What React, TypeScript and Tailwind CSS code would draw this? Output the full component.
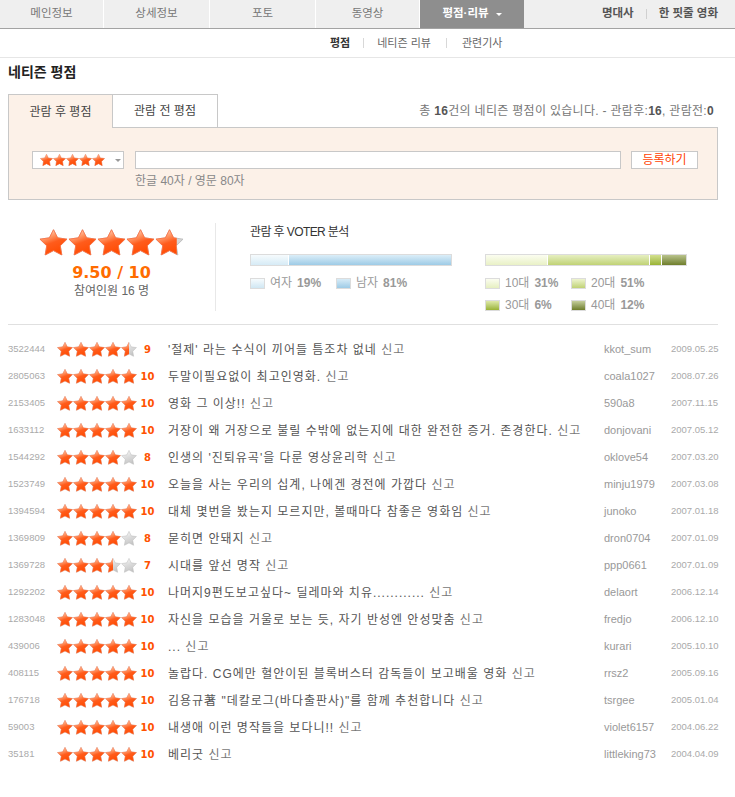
import React, { useId } from "react";

const STAR =
  "M12 0.6 L15.4 7.3 L23.2 8.4 L17.6 13.9 L18.9 21.5 L12 17.9 L5.1 21.5 L6.4 13.9 L0.8 8.4 L8.6 7.3 Z";

function Star({ w, fill }: { w: number; fill: number }) {
  const raw = useId().replace(/[^a-zA-Z0-9]/g, "");
  const h = (w * 22) / 24;
  return (
    <svg width={w} height={h} viewBox="0 0 24 22" className="block shrink-0">
      <defs>
        <linearGradient id={raw + "o"} x1="0.15" y1="0" x2="0.55" y2="1">
          <stop offset="0" stopColor="#ffe6da" />
          <stop offset="0.3" stopColor="#ff9a6a" />
          <stop offset="0.55" stopColor="#ff5c1c" />
          <stop offset="1" stopColor="#ff4a00" />
        </linearGradient>
        <linearGradient id={raw + "g"} x1="0.15" y1="0" x2="0.55" y2="1">
          <stop offset="0" stopColor="#ffffff" />
          <stop offset="0.45" stopColor="#dedede" />
          <stop offset="1" stopColor="#c4c4c4" />
        </linearGradient>
        <clipPath id={raw + "c"}>
          <rect x="0" y="0" width={24 * fill} height="22" />
        </clipPath>
      </defs>
      <path d={STAR} fill={`url(#${raw}g)`} stroke="#b8b8b8" strokeWidth="0.7" strokeLinejoin="round" />
      {fill > 0 && (
        <path
          d={STAR}
          fill={`url(#${raw}o)`}
          stroke="#ff7040"
          strokeWidth="0.7"
          strokeLinejoin="round"
          clipPath={`url(#${raw}c)`}
        />
      )}
    </svg>
  );
}

function Stars({ value, w }: { value: number; w: number }) {
  const arr = [0, 1, 2, 3, 4].map((i) => Math.max(0, Math.min(1, value - i)));
  return (
    <div className="flex">
      {arr.map((f, i) => (
        <Star key={i} w={w} fill={f} />
      ))}
    </div>
  );
}

const rows: [string, number, string, string, string][] = [
  ["3522444", 9, "'절제' 라는 수식이 끼어들 틈조차 없네", "kkot_sum", "2009.05.25"],
  ["2805063", 10, "두말이필요없이 최고인영화.", "coala1027", "2008.07.26"],
  ["2153405", 10, "영화 그 이상!!", "590a8", "2007.11.15"],
  ["1633112", 10, "거장이 왜 거장으로 불릴 수밖에 없는지에 대한 완전한 증거. 존경한다.", "donjovani", "2007.05.12"],
  ["1544292", 8, "인생의 '진퇴유곡'을 다룬 영상윤리학", "oklove54", "2007.03.20"],
  ["1523749", 10, "오늘을 사는 우리의 십계, 나에겐 경전에 가깝다", "minju1979", "2007.03.08"],
  ["1394594", 10, "대체 몇번을 봤는지 모르지만, 볼때마다 참좋은 영화임", "junoko", "2007.01.18"],
  ["1369809", 8, "묻히면 안돼지", "dron0704", "2007.01.09"],
  ["1369728", 7, "시대를 앞선 명작", "ppp0661", "2007.01.09"],
  ["1292202", 10, "나머지9편도보고싶다~ 딜레마와 치유............", "delaort", "2006.12.14"],
  ["1283048", 10, "자신을 모습을 거울로 보는 듯, 자기 반성엔 안성맞춤", "fredjo", "2006.12.10"],
  ["439006", 10, "...", "kurari", "2005.10.10"],
  ["408115", 10, "놀랍다. CG에만 혈안이된 블록버스터 감독들이 보고배울 영화", "rrsz2", "2005.09.16"],
  ["176718", 10, "김용규著 \"데칼로그(바다출판사)\"를 함께 추천합니다", "tsrgee", "2005.01.04"],
  ["59003", 10, "내생애 이런 명작들을 보다니!!", "violet6157", "2004.06.22"],
  ["35181", 10, "베리굿", "littleking73", "2004.04.09"],
];

function Legend({ box, label, pct, w }: { box: string; label: string; pct: string; w: string }) {
  return (
    <div className={`flex items-center h-[16px] ${w}`}>
      <span className={`block w-[15px] h-[11px] border border-[#dcdcdc] ${box}`} />
      <span className="ml-[5px] text-[12px] text-[#999]">{label}</span>
      <span className="ml-[5px] text-[12px] font-bold text-[#999]">{pct}</span>
    </div>
  );
}

export default function App() {
  const font = "font-['Liberation_Sans','Noto_Sans_CJK_KR',sans-serif]";
  const navTab = "flex items-center justify-center h-full border-r border-white text-[11.5px] text-[#777]";
  return (
    <div className={`${font} w-[735px] bg-white text-[#333]`}>
      {/* top nav */}
      <div className="flex h-[29px] bg-[#efefef] border-b border-[#a3a3a3]">
        <div className={`${navTab} w-[104px]`}>메인정보</div>
        <div className={`${navTab} w-[106px]`}>상세정보</div>
        <div className={`${navTab} w-[106px]`}>포토</div>
        <div className={`${navTab} w-[104px]`}>동영상</div>
        <div className="flex items-center justify-center w-[104px] h-full bg-[#8e8e8e] text-white font-bold text-[11.5px]">
          평점·리뷰
          <span className="ml-[7px] w-0 h-0 border-l-[3px] border-r-[3px] border-t-[3px] border-l-transparent border-r-transparent border-t-white" />
        </div>
        <div className="flex flex-1 items-center justify-end pr-[17px] text-[11.5px] font-bold text-[#555]">
          <span>명대사</span>
          <span className="mx-[12px] w-px h-[10px] bg-[#d0d0d0]" />
          <span>한 핏줄 영화</span>
        </div>
      </div>
      {/* sub nav */}
      <div className="flex items-center h-[29px] border-b border-[#e6e6e6] pl-[330px] text-[11px] text-[#666]">
        <span className="font-bold text-[#333]">평점</span>
        <span className="mx-[13px] w-px h-[10px] bg-[#d8d8d8]" />
        <span>네티즌 리뷰</span>
        <span className="mx-[15px] w-px h-[10px] bg-[#d8d8d8]" />
        <span>관련기사</span>
      </div>

      <div className="px-[8px] w-[718px] box-content">
        <div className="pt-[6px] pb-[14px] text-[14px] leading-[16px] font-bold text-[#222]">네티즌 평점</div>

        {/* tabs */}
        <div className="flex h-[34px] w-[710px]">
          <div className="flex items-center justify-center w-[105px] bg-[#fcf1e8] border-l border-t border-r border-[#c8c8c8] text-[12px] text-[#444]">
            관람 후 평점
          </div>
          <div className="flex items-center justify-center w-[105px] bg-white border-t border-r border-b border-[#c8c8c8] text-[12px] text-[#444]">
            관람 전 평점
          </div>
          <div className="flex flex-1 items-center justify-end pr-[4px] border-b border-[#c8c8c8] text-[12px] tracking-[0.3px] text-[#777]">
            총&nbsp;<b className="text-[#555]">16</b>건의 네티즌 평점이 있습니다. - 관람후:<b className="text-[#555]">16</b>, 관람전:<b className="text-[#555]">0</b>
          </div>
        </div>
        <div className="w-[710px] h-[72px] bg-[#fcf1e8] border-l border-r border-b border-[#c8c8c8] pt-[23px] pl-[23px]">
          <div className="flex items-center">
            <div className="flex items-center w-[92px] h-[18px] bg-white border border-[#c8c8c8] pl-[7px]">
              <Stars value={5} w={13} />
              <span className="ml-[10px] w-0 h-0 border-l-[3px] border-r-[3px] border-t-[3px] border-l-transparent border-r-transparent border-t-[#999]" />
            </div>
            <div className="ml-[11px] w-[486px] h-[18px] bg-white border border-[#c8c8c8]" />
            <div className="ml-[10px] flex items-center justify-center w-[67px] h-[18px] bg-white border border-[#c8c8c8] text-[12px] text-[#ff4200]">
              등록하기
            </div>
          </div>
          <div className="mt-[4px] ml-[103px] text-[12px] leading-[16px] text-[#888]">한글 40자 / 영문 80자</div>
        </div>

        {/* summary */}
        <div className="flex h-[125px] w-[710px] border-b border-[#e0e0e0]">
          <div className="mt-[23px] h-[88px] w-[208px] border-r border-[#e8e8e8] flex flex-col items-center pt-[6px]">
            <Stars value={4.75} w={29} />
            <div className="mt-[8px] font-['DejaVu_Sans',sans-serif] text-[16px] leading-[18px] font-bold text-[#ff6c00]">9.50 / 10</div>
            <div className="mt-px text-[12px] leading-[16px] text-[#666]">참여인원 16 명</div>
          </div>
          <div className="pl-[34px] pt-[24px]">
            <div className="text-[12px] leading-[16px] text-[#333] tracking-[-0.6px]">관람 후 VOTER 분석</div>
            <div className="flex mt-[14px]">
              <div>
                <div className="flex w-[202px] h-[12px] border border-[#dcdcdc]">
                  <div className="w-[19%] h-full bg-linear-to-b from-[#f6fbfd] to-[#d6ebf6] border-r border-white" />
                  <div className="flex-1 h-full bg-linear-to-b from-[#dbeef8] to-[#9dcbe6]" />
                </div>
                <div className="flex mt-[9px]">
                  <Legend box="bg-linear-to-b from-[#f6fbfd] to-[#d0e7f3]" label="여자" pct="19%" w="w-[86px]" />
                  <Legend box="bg-linear-to-b from-[#d8ecf7] to-[#9dcbe6]" label="남자" pct="81%" w="w-[100px]" />
                </div>
              </div>
              <div className="ml-[33px]">
                <div className="flex w-[202px] h-[12px] border border-[#dcdcdc]">
                  <div className="w-[31%] h-full bg-linear-to-b from-[#fbfdf0] to-[#e9f1c6] border-r border-white" />
                  <div className="w-[51%] h-full bg-linear-to-b from-[#e6efc0] to-[#c0d274] border-r border-white" />
                  <div className="w-[6%] h-full bg-linear-to-b from-[#d3e08e] to-[#9ab332] border-r border-white" />
                  <div className="flex-1 h-full bg-linear-to-b from-[#b9c38c] to-[#6f7e2a]" />
                </div>
                <div className="flex mt-[9px]">
                  <Legend box="bg-linear-to-b from-[#fbfdf0] to-[#e6efc0]" label="10대" pct="31%" w="w-[86px]" />
                  <Legend box="bg-linear-to-b from-[#eef4cf] to-[#c0d274]" label="20대" pct="51%" w="w-[100px]" />
                </div>
                <div className="flex mt-[6px]">
                  <Legend box="bg-linear-to-b from-[#dfe9a8] to-[#9ab332]" label="30대" pct="6%" w="w-[86px]" />
                  <Legend box="bg-linear-to-b from-[#c5ce9c] to-[#6f7e2a]" label="40대" pct="12%" w="w-[100px]" />
                </div>
              </div>
            </div>
          </div>
        </div>

        {/* list */}
        <div className="pt-[11px] w-[710px]">
          {rows.map(([id, score, text, user, date]) => (
            <div key={id} className="flex items-center h-[27px]">
              <div className="w-[49px] text-[9.5px] text-[#aaa]">{id}</div>
              <div className="w-[80px]">
                <Stars value={score / 2} w={16} />
              </div>
              <div className="w-[21px] text-center font-['DejaVu_Sans',sans-serif] text-[10px] font-bold text-[#ff5200]">{score}</div>
              <div className="flex-1 ml-[10px] text-[12px] tracking-[1px] text-[#555] whitespace-nowrap">
                {text} <span className="text-[#777]">신고</span>
              </div>
              <div className="w-[67px] text-[11px] text-[#999] whitespace-nowrap">{user}</div>
              <div className="w-[47px] text-right text-[9.5px] text-[#aaa]">{date}</div>
            </div>
          ))}
        </div>
      </div>
    </div>
  );
}
